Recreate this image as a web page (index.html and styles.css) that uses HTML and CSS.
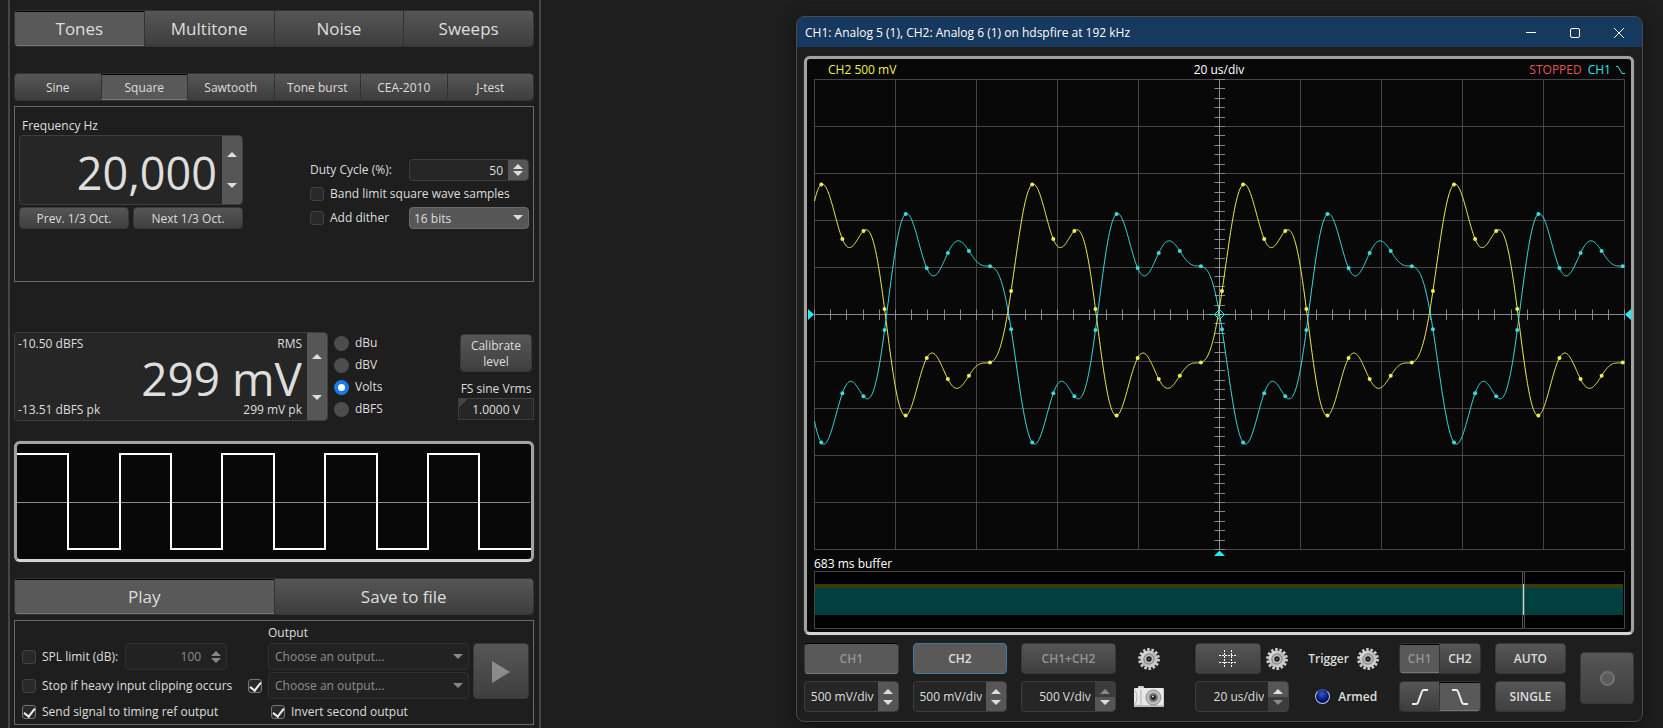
FILE: index.html
```html
<!DOCTYPE html>
<html lang="en">
<head>
	<meta charset="utf-8">
	<title>Signal generator</title>
	<link rel="stylesheet" href="styles.css">
</head>
<body>
	<svg class="defs" aria-hidden="true">
		<defs>
			<linearGradient id="silver" x1="0" y1="0" x2="1" y2="1">
				<stop offset="0" stop-color="#f2f2f2"/>
				<stop offset="0.5" stop-color="#b4b4b4"/>
				<stop offset="1" stop-color="#dedede"/>
			</linearGradient>
			<symbol id="gear" viewBox="-12 -12 24 24">
				<circle r="9.3" fill="none" stroke="#cfcfcf" stroke-width="3.2" stroke-dasharray="2.5 1.674"/>
				<circle r="8.600" fill="url(#silver)"/>
				<circle r="5.200" fill="#a8a8a8" stroke="#8a8a8a"/>
				<circle r="3.800" fill="#c4c4c4"/>
				<circle r="2.700" fill="#1d1d1d"/>
				<circle r="1" fill="#666"/>
			</symbol>
		</defs>
	</svg>

	<main class="generator">
		<div class="tabs big">
			<button class="active">Tones</button>
			<button>Multitone</button>
			<button>Noise</button>
			<button>Sweeps</button>
		</div>
		<div class="tabs small">
			<button>Sine</button>
			<button class="active">Square</button>
			<button>Sawtooth</button>
			<button>Tone burst</button>
			<button>CEA-2010</button>
			<button>J-test</button>
		</div>

		<section class="box tone">
			<div class="freq">
				<label for="freq">Frequency Hz</label>
				<div class="spin freq-spin">
					<input id="freq" type="text" value="20,000">
					<div class="arrows"><button class="up" aria-label="Up"></button><button class="down" aria-label="Down"></button></div>
				</div>
				<div class="pair">
					<button class="btn">Prev. 1/3 Oct.</button>
					<button class="btn">Next 1/3 Oct.</button>
				</div>
			</div>
			<div class="options">
				<label for="duty">Duty Cycle (%):</label>
				<div class="spin">
					<input id="duty" type="text" value="50">
					<div class="arrows"><button class="up" aria-label="Up"></button><button class="down" aria-label="Down"></button></div>
				</div>
				<label class="check wide"><input type="checkbox">Band limit square wave samples</label>
				<label class="check"><input type="checkbox">Add dither</label>
				<div class="select">
					<select aria-label="Dither bits"><option>16 bits</option></select>
				</div>
			</div>
		</section>

		<section class="level">
			<div class="spin level-spin">
				<div class="readout">
					<div class="line"><span>-10.50 dBFS</span><span>RMS</span></div>
					<input type="text" value="299 mV" aria-label="Level">
					<div class="line"><span>-13.51 dBFS pk</span><span>299 mV pk</span></div>
				</div>
				<div class="arrows"><button class="up" aria-label="Up"></button><button class="down" aria-label="Down"></button></div>
			</div>
			<div class="units">
				<label><input type="radio" name="unit">dBu</label>
				<label><input type="radio" name="unit">dBV</label>
				<label><input type="radio" name="unit" checked>Volts</label>
				<label><input type="radio" name="unit">dBFS</label>
			</div>
			<div class="calibrate">
				<button class="btn">Calibrate<br>level</button>
				<label for="fs">FS sine Vrms</label>
				<input id="fs" type="text" value="1.0000 V">
			</div>
		</section>

		<div class="screen wave">
			<svg viewBox="0 0 514 115">
				<path d="M0 58.5H513" stroke="#8c8c8c" fill="none"/>
				<path d="M0 10H51V105H103V10H154V105H205V10H257V105H308V10H360V105H411V10H462V105H514" stroke="#fff" stroke-width="2" fill="none"/>
			</svg>
		</div>

		<div class="tabs big play">
			<button class="active">Play</button>
			<button>Save to file</button>
		</div>

		<section class="box output">
			<label class="out-label" for="out1">Output</label>
			<div class="spl">
				<label class="check"><input type="checkbox">SPL limit (dB):</label>
				<div class="spin off">
					<input type="text" value="100" aria-label="SPL limit" disabled>
					<div class="arrows"><button class="up" aria-label="Up" disabled></button><button class="down" aria-label="Down" disabled></button></div>
				</div>
			</div>
			<div class="select off out1">
				<select id="out1" disabled><option>Choose an output...</option></select>
			</div>
			<button class="btn start" aria-label="Start" disabled>
				<svg width="20" height="22" viewBox="0 0 20 22"><path d="M1 0L19 11L1 22Z" fill="#8b8b8b"/></svg>
			</button>
			<label class="check stop"><input type="checkbox">Stop if heavy input clipping occurs</label>
			<div class="check second"><input type="checkbox" checked aria-label="Use second output"></div>
			<div class="select off out2">
				<select aria-label="Second output" disabled><option>Choose an output...</option></select>
			</div>
			<label class="check timing"><input type="checkbox" checked>Send signal to timing ref output</label>
			<label class="check invert"><input type="checkbox" checked>Invert second output</label>
		</section>
	</main>

	<section class="window">
		<header class="title">
			<span>CH1: Analog 5 (1), CH2: Analog 6 (1) on hdspfire at 192 kHz</span>
			<div class="win-buttons">
				<button aria-label="Minimize"><svg width="12" height="12" viewBox="0 0 12 12"><path d="M1 5.500H11"/></svg></button>
				<button aria-label="Maximize"><svg width="12" height="12" viewBox="0 0 12 12"><rect x="1.500" y="1.500" width="9" height="9" rx="1.500"/></svg></button>
				<button aria-label="Close"><svg width="12" height="12" viewBox="0 0 12 12"><path d="M1 1L11 11M11 1L1 11"/></svg></button>
			</div>
		</header>

		<div class="content">
			<div class="screen scope">
				<div class="info">
					<span class="ch2">CH2 500 mV</span>
					<span class="time">20 us/div</span>
					<span class="status"><span class="stopped">STOPPED</span><span class="ch1">CH1</span><svg width="10" height="10" viewBox="0 0 10 10"><path d="M1 1.500H3L7 8.500H10" fill="none" stroke="#2fe6e6"/></svg></span>
				</div>
				<svg class="plot" id="plot" viewBox="0 0 824 478"></svg>
				<div class="buffer-label">683 ms buffer</div>
				<div class="buffer">
					<div class="band"></div>
					<div class="cursor" style="left:87.4%"></div>
				</div>
			</div>

			<div class="controls">
				<div class="group">
					<button class="btn dim active">CH1</button>
					<div class="spin">
						<input type="text" value="500 mV/div" aria-label="CH1 scale">
						<div class="arrows"><button class="up" aria-label="Up"></button><button class="down" aria-label="Down"></button></div>
					</div>
				</div>
				<div class="group">
					<button class="btn active focus">CH2</button>
					<div class="spin">
						<input type="text" value="500 mV/div" aria-label="CH2 scale">
						<div class="arrows"><button class="up" aria-label="Up"></button><button class="down" aria-label="Down"></button></div>
					</div>
				</div>
				<div class="group">
					<button class="btn dim">CH1+CH2</button>
					<div class="spin">
						<input type="text" value="500 V/div" aria-label="Sum scale">
						<div class="arrows"><button class="up" aria-label="Up" disabled></button><button class="down" aria-label="Down"></button></div>
					</div>
				</div>
				<div class="group icons">
					<button class="icon" aria-label="Channel settings"><svg width="24" height="24"><use href="#gear"/></svg></button>
					<button class="icon" aria-label="Take picture">
						<svg width="32" height="24" viewBox="0 0 32 24">
							<rect x="5" y="1" width="6" height="4" rx="1" fill="#d0d0d0"/>
							<rect x="1" y="3" width="30" height="19" rx="1" fill="#e8e8e8"/>
							<path d="M1 20H31V22H1Z" fill="#bbb"/>
							<path d="M2 5Q6 12 2 20M8 5V20" fill="none" stroke="#b0b0b0"/>
							<circle cx="20.500" cy="12.500" r="7.500" fill="#bdbdbd" stroke="#8a8a8a"/>
							<circle cx="20.500" cy="12.500" r="4.500" fill="#777"/>
							<circle cx="20.500" cy="12.500" r="2.500" fill="#1d1d1d"/>
							<circle cx="20" cy="11.500" r="1" fill="#ddd"/>
						</svg>
					</button>
				</div>
				<div class="group timebase">
					<div class="row">
						<button class="btn grow" aria-label="Grid">
							<svg width="20" height="20" viewBox="0 0 20 20"><path d="M6.500 1V19M13.500 1V19M1 6.500H19M1 13.500H19" fill="none" stroke="#fff" stroke-dasharray="2 1"/></svg>
						</button>
						<button class="icon" aria-label="Grid settings"><svg width="24" height="24"><use href="#gear"/></svg></button>
					</div>
					<div class="spin">
						<input type="text" value="20 us/div" aria-label="Time scale">
						<div class="arrows"><button class="up" aria-label="Up"></button><button class="down" aria-label="Down" disabled></button></div>
					</div>
				</div>
				<div class="group trigger">
					<div class="row"><span>Trigger</span><button class="icon" aria-label="Trigger settings"><svg width="24" height="24"><use href="#gear"/></svg></button></div>
					<div class="row armed"><span class="led"></span><span>Armed</span></div>
				</div>
				<div class="group source">
					<div class="tabs bold"><button class="active dim">CH1</button><button>CH2</button></div>
					<div class="tabs">
						<button aria-label="Rising edge"><svg width="18" height="18" viewBox="0 0 18 18"><path d="M1 16H5Q6.500 16 7 14.500L11 3.500Q11.500 2 13 2H17"/></svg></button>
						<button class="active" aria-label="Falling edge"><svg width="18" height="18" viewBox="0 0 18 18"><path d="M1 2H5Q6.500 2 7 3.500L11 14.500Q11.500 16 13 16H17"/></svg></button>
					</div>
				</div>
				<div class="group modes">
					<button class="btn">AUTO</button>
					<button class="btn">SINGLE</button>
				</div>
				<button class="btn record" aria-label="Record" disabled><span></span></button>
			</div>
		</div>
	</section>
	<script src="script.js"></script>
</body>
</html>
```
FILE: styles.css
```css
*{
	box-sizing: border-box;
}
body{
	margin: 0;
	padding: 0 20px 0 8px;
	min-height: 100vh;
	display: grid;
	grid-template-columns: minmax(0, 533fr) minmax(0, 847fr);
	column-gap: 255px;
	align-items: start;
	background-color: #1e1e1e;
	color: #dedede;
	font: 12px/16px "Open Sans", "Noto Sans", sans-serif;
}
.defs{
	position: absolute;
	width: 0;
	height: 0;
}
button, input, select{
	margin: 0;
	font: inherit;
	color: inherit;
}
svg{
	display: block;
}

/* left panel */
.generator{
	min-height: 100vh;
	padding: 10px 5px 0 4px;
	border: solid #464646;
	border-width: 0 2px;
}
.tabs{
	display: flex;
	height: 31px;
	border: 1px solid #333;
	border-radius: 4px;
	overflow: hidden;
}
.tabs button{
	flex: 1;
	min-width: 0;
	display: flex;
	align-items: center;
	justify-content: center;
	padding: 1px 0 0;
	border: 0;
	border-left: 1px solid #333;
	background: linear-gradient(#565656, #3d3d3d);
}
.tabs button:first-child{
	border-left: 0;
}
.tabs .active{
	background: #595959;
	border-top: 1px solid #000;
	border-bottom: 1px solid #777;
}
.tabs.big{
	height: 37px;
	font-size: 17px;
}
.tabs.small{
	height: 28px;
	margin: 26px 0 5px;
}
.box{
	border: 1px solid #6a6a6a;
}
.btn{
	display: flex;
	align-items: center;
	justify-content: center;
	padding: 1px 0 0;
	border: 1px solid #383838;
	border-radius: 4px;
	background: linear-gradient(#565656, #3f3f3f);
}
.btn.active{
	background: #595959;
	border-top-color: #000;
	border-bottom-color: #777;
}
.tabs .dim, .dim{
	color: #949494;
}

.spin{
	display: flex;
	height: 22px;
	border: 1px solid #3e3e3e;
	border-radius: 4px;
	background-color: #262626;
	overflow: hidden;
}
.spin input{
	flex: 1;
	min-width: 0;
	padding: 1px 5px 0;
	border: 0;
	background: none;
	text-align: right;
}
.arrows{
	flex: none;
	width: 20px;
	display: flex;
	flex-direction: column;
	background-color: #565656;
}
.arrows button{
	flex: 1;
	display: flex;
	justify-content: center;
	padding: 1px 0;
	border: 0;
	background: none;
}
.arrows .up{
	align-items: flex-end;
}
.arrows .down{
	align-items: flex-start;
}
.arrows .up::before, .arrows .down::before{
	content: "";
	border: 5px solid transparent;
	border-top-width: 0;
	border-bottom: 5px solid #ddd;
}
.arrows .down::before{
	border-bottom-width: 0;
	border-top: 5px solid #ddd;
}
.arrows button:disabled{
	background-color: #3c3c3c;
}
.arrows .up:disabled::before{
	border-bottom-color: #888;
}
.arrows .down:disabled::before{
	border-top-color: #888;
}

.select{
	position: relative;
	height: 22px;
}
.select select{
	appearance: none;
	width: 100%;
	height: 100%;
	padding: 1px 4px 0;
	border: 1px solid #6a6a6a;
	border-radius: 4px;
	background-color: #565656;
	opacity: 1;
}
.select::after{
	content: "";
	position: absolute;
	right: 6px;
	top: 50%;
	margin-top: -3px;
	border: 5px solid transparent;
	border-top-color: #ddd;
	border-bottom: 0;
}
.off, .off input{
	color: #8e8e8e;
}
.select.off select{
	padding: 0 6px;
	border-color: #303030;
	background-color: #222;
}
.select.off::after{
	border-top-color: #888;
}
.spin.off{
	border-color: #303030;
	background-color: #222;
}
.off .arrows, .off .arrows button{
	background: none;
}

.check{
	display: flex;
	align-items: center;
	gap: 6px;
}
.check input{
	appearance: none;
	display: flex;
	justify-content: center;
	flex: none;
	width: 14px;
	height: 14px;
	border: 1px solid #424242;
	border-radius: 3px;
	background-color: #292929;
}
.check input:checked{
	border-color: #757575;
}
.check input:checked::after{
	content: "";
	width: 5px;
	height: 9px;
	border: solid #eee;
	border-width: 0 2px 2px 0;
	transform: rotate(38deg);
}

.tone{
	display: flex;
	justify-content: space-between;
	align-items: flex-end;
	padding: 10px 4px 52px;
}
.freq{
	flex: 224 1 0;
	min-width: 0;
}
.freq label{
	display: block;
	padding-left: 3px;
	line-height: 18px;
}
.freq-spin{
	height: 70px;
	margin-bottom: 2px;
}
.freq-spin input{
	padding: 4px 5px 0;
	font-size: 45px;
}
.freq-spin .arrows button{
	padding: 13px 0;
}
.pair{
	display: flex;
	gap: 4px;
}
.pair .btn{
	flex: 1;
	height: 22px;
}
.options{
	flex: 219 1 0;
	min-width: 0;
	margin-left: 67px;
	display: grid;
	grid-template-columns: 99fr 120fr;
	grid-auto-rows: 22px;
	row-gap: 2px;
	align-items: center;
	white-space: nowrap;
}
.wide{
	grid-column: 1 / 3;
}

.level{
	display: flex;
	margin: 50px 0 20px;
}
.level-spin{
	flex: 1;
	min-width: 0;
	height: auto;
}
.readout{
	flex: 1;
	min-width: 0;
	display: flex;
	flex-direction: column;
	justify-content: space-between;
	padding: 3px 5px 2px 3px;
}
.line{
	display: flex;
	justify-content: space-between;
}
.readout input{
	flex: none;
	width: 100%;
	height: 50px;
	padding: 2px 0 0;
	font-size: 46px;
}
.level-spin .arrows button{
	padding: 18px 0;
}
.units{
	width: 130px;
	padding-left: 6px;
}
.units label{
	display: flex;
	align-items: center;
	gap: 6px;
	height: 22px;
}
.units input{
	appearance: none;
	width: 15px;
	height: 15px;
	border-radius: 50%;
	background-color: #4d4d4d;
}
.units input:checked{
	border: 4px solid #1a7be8;
	background-color: #fff;
}
.calibrate{
	width: 76px;
	padding-top: 2px;
	text-align: center;
	white-space: nowrap;
}
.calibrate .btn{
	width: 72px;
	height: 38px;
	margin: 0 2px 9px;
}
.calibrate label{
	display: block;
}
.calibrate input{
	width: 100%;
	height: 22px;
	margin-top: 1px;
	padding: 0;
	border: 1px solid #3e3e3e;
	background: linear-gradient(135deg, #444 6px, #262626 6px);
	text-align: center;
}

.screen{
	border: 3px solid #a2a2a2;
	border-bottom-color: #d4d4d4;
	border-radius: 6px;
	background-color: #080808;
	box-shadow: 0 0 1px #777;
}
.wave{
	margin-bottom: 16px;
}
.play{
	margin-bottom: 5px;
}
.output{
	display: grid;
	grid-template-columns: minmax(0, 226fr) minmax(0, 20fr) minmax(0, 201fr) minmax(0, 60fr);
	grid-template-rows: 18px 27px 27px 22px;
	row-gap: 2px;
	align-items: center;
	padding: 2px 4px 1px 7px;
	white-space: nowrap;
}
.out-label{
	grid-area: 1 / 3;
	align-self: end;
}
.spl{
	grid-area: 2 / 1;
	display: flex;
	gap: 7px;
}
.spl .spin{
	width: 102px;
	height: 27px;
}
.spl .spin .arrows button{
	padding: 1px 0;
}
.out1{
	grid-area: 2 / 3;
}
.out2{
	grid-area: 3 / 3;
}
.out1, .out2{
	height: 27px;
}
.start{
	grid-area: 2 / 4 / 4 / 5;
	height: 56px;
	margin-left: 4px;
}
.stop{
	grid-area: 3 / 1;
}
.second{
	grid-area: 3 / 2;
}
.timing{
	grid-area: 4 / 1;
}
.invert{
	grid-area: 4 / 3 / 5 / 5;
	padding-left: 3px;
}

/* oscilloscope window */
.window{
	margin-top: 16px;
	border: 1px solid #4a4a4a;
	border-radius: 8px;
	background-color: #1e1e1e;
	overflow: hidden;
	box-shadow: 0 4px 16px #111;
}
.title{
	display: flex;
	justify-content: space-between;
	align-items: center;
	height: 30px;
	padding: 1px 1px 0 8px;
	background-color: #15395f;
	color: #fff;
}
.win-buttons{
	display: flex;
}
.win-buttons button{
	width: 44px;
	height: 28px;
	display: flex;
	align-items: center;
	justify-content: center;
	padding: 0;
	border: 0;
	background: none;
}
.win-buttons svg{
	fill: none;
	stroke: #fff;
}
.content{
	padding: 9px 8px 9px 7px;
}
.scope{
	padding-bottom: 3px;
	color: #fff;
}
.info{
	display: grid;
	grid-template-columns: 1fr 1fr 1fr;
	height: 20px;
	padding: 0 6px 0 21px;
	line-height: 22px;
}
.time{
	padding-right: 15px;
	text-align: center;
}
.status{
	display: flex;
	justify-content: flex-end;
	align-items: center;
	gap: 6px;
}
.status svg{
	margin-left: -2px;
}
.ch2{
	color: #eeee50;
}
.ch1{
	color: #2fe6e6;
}
.stopped{
	color: #e05656;
}
.plot{
	width: 100%;
}
.buffer-label{
	height: 14px;
	padding-left: 7px;
	line-height: 14px;
}
.buffer{
	position: relative;
	height: 58px;
	margin: 0 6px 0 7px;
	padding: 12px 1px 12px 0;
	border: 1px solid #444;
	background-color: #000;
}
.band{
	height: 31px;
	border-top: 4px solid #3a3a0a;
	background-color: #004040;
}
.cursor{
	position: absolute;
	top: 0;
	bottom: 0;
	width: 3px;
	border: solid #555;
	border-width: 0 1px;
	background: linear-gradient(transparent 12px, #8ff0e0 12px, #8ff0e0 43px, transparent 43px);
}

.controls{
	display: flex;
	gap: 14px;
	align-items: center;
	margin-top: 8px;
	font-weight: 600;
}
.group{
	flex: 95 1 0;
	min-width: 0;
	display: flex;
	flex-direction: column;
	gap: 7px;
}
.group > .btn, .group .spin, .row{
	height: 31px;
}
.group .spin{
	font-weight: 400;
}
.group .spin input{
	padding: 1px 4px 0;
}
.group .spin .arrows button{
	padding: 3px 0;
}
.btn.focus{
	border-color: #3f7ba6;
}
.icons{
	flex-grow: 32;
	margin: 0 16px 0 3px;
}
.icon{
	display: flex;
	align-items: center;
	justify-content: center;
	height: 31px;
	padding: 0;
	border: 0;
	background: none;
}
.row{
	display: flex;
	align-items: center;
	justify-content: space-between;
	gap: 4px;
}
.grow{
	flex: 1;
	height: 31px;
}
.trigger{
	flex-grow: 72;
	margin: 0 5px;
}
.armed{
	justify-content: flex-start;
	gap: 8px;
	padding-left: 7px;
}
.led{
	flex: none;
	width: 15px;
	height: 15px;
	border: 1px solid #b8c4e4;
	border-top-color: #44559a;
	border-radius: 50%;
	background: radial-gradient(circle at 45% 30%, #3858c8, #00126c 60%);
}
.source{
	flex-grow: 82;
}
.source svg{
	fill: none;
	stroke: #eee;
	stroke-width: 2;
}
.modes{
	flex-grow: 72;
}
.record{
	flex: 52 1 0;
	height: 52px;
}
.record span{
	width: 15px;
	height: 15px;
	border: 2px solid #737373;
	border-radius: 50%;
	background-color: #5b5b5b;
}
```
FILE: script.js
```js
var plot = document.getElementById("plot");
var left = 7.5, top0 = 0.5, divX = 81, divY = 47;
var midX = left + divX * 5, midY = top0 + divY * 5;
var right = left + divX * 10, bottom = top0 + divY * 10;
var step = 21.09, first = 14.3;

// one period of each channel, 10 samples
var ch1 = [363.5, 314.3, 317.3, 251, 135, 189, 174, 172, 187.3, 250.3];
var ch2 = [105.5, 160, 152, 230, 336.5, 279, 300, 296.7, 283.5, 212];

function add(name, attrs) {
	var el = document.createElementNS("http://www.w3.org/2000/svg", name);
	for (var a in attrs) {
		el.setAttribute(a, attrs[a]);
	}
	plot.appendChild(el);
}

// periodic sinc interpolation between the samples
function valueAt(data, x) {
	var n = data.length, sum = 0;
	for (var k = 0; k < n; k++) {
		var t = (x - first) / step - k;
		var d = n * Math.tan(Math.PI * t / n);
		sum += data[k] * (Math.abs(d) < 1e-6 ? (Math.round(t) % n == 0 ? 1 : 0) : Math.sin(Math.PI * t) / d);
	}
	return sum;
}

function drawGrid() {
	var d = "", ticks = "", i;
	for (i = 0; i <= 10; i++) {
		d += "M" + (left + divX * i) + " " + top0 + "V" + bottom;
		d += "M" + left + " " + (top0 + divY * i) + "H" + right;
	}
	add("path", {d: d, stroke: "#464646", fill: "none"});
	for (i = 0; i <= 50; i++) {
		ticks += "M" + (Math.floor(left + divX * i / 5) + 0.5) + " " + (midY - 5) + "v10.5";
		ticks += "M" + (midX - 5) + " " + (Math.floor(top0 + divY * i / 5) + 0.5) + "h10.5";
	}
	ticks += "M" + left + " " + midY + "H" + right + "M" + midX + " " + top0 + "V" + bottom;
	add("path", {d: ticks, stroke: "#888", fill: "none"});
}

function drawTrace(data, color) {
	var d = "", x;
	for (x = left; x <= first + step * 38; x += 0.5) {
		d += (d ? "L" : "M") + x + " " + valueAt(data, x).toFixed(2);
	}
	add("path", {d: d, stroke: color, fill: "none"});
	for (var i = 0; i <= 38; i++) {
		add("circle", {cx: first + step * i, cy: data[i % 10], r: 2, fill: color});
	}
}

drawGrid();
drawTrace(ch2, "#eeee50");
drawTrace(ch1, "#35dede");

// trigger position and level markers
add("path", {d: "M1 230L7 235.5L1 241ZM824 230L818 235.5L824 241ZM412.5 471.500L418 477H407Z", fill: "#22f0f0"});
add("path", {d: "M412.5 230.500L417.500 235.500L412.500 240.500L407.500 235.500ZM402 235.500H423", fill: "none", stroke: "#35dede"});
```
